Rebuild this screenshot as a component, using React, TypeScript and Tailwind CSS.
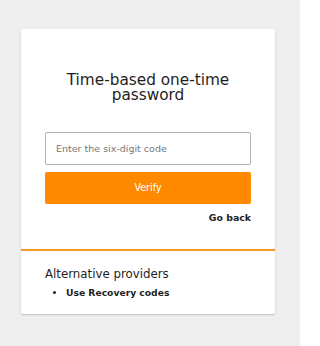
export default function App() {
  return (
    <div className="w-[300px] h-[346px] bg-[#eeeeee] pt-[29px] pl-[21px]" style={{ fontFamily: '"DejaVu Sans", Verdana, sans-serif' }}>
      <div className="w-[254px] bg-white rounded-[2px] shadow-[0_1px_2px_rgba(0,0,0,0.2)]">
        <div className="px-[24px] pt-[44px] pb-[26px] flex flex-col">
          <h1 className="text-[15.3px] leading-[15px] text-center text-[#1e1e1e]">Time-based one-time password</h1>
          <input
            className="mt-[29px] h-[33px] w-full border border-[#b3b3b3] rounded-[2px] px-[10px] text-[9.5px] text-[#333] placeholder:text-[#777777] outline-none"
            placeholder="Enter the six-digit code"
          />
          <button className="mt-[7px] h-[32px] w-full bg-[#ff8a00] rounded-[2px] text-white text-[9.6px]">Verify</button>
          <div className="mt-[8px] text-right text-[9.4px] font-bold text-[#1e1e1e] leading-[11px]">Go back</div>
        </div>
        <div className="h-[2px] bg-[#f29b2c]" />
        <div className="px-[24px] pt-[16px] pb-[16px]">
          <div className="text-[11.8px] leading-[14px] text-[#1e1e1e]">Alternative providers</div>
          <ul className="list-disc pl-[21px] mt-[6px] text-[9.2px] font-bold text-[#1e1e1e] leading-[11px]">
            <li>Use Recovery codes</li>
          </ul>
        </div>
      </div>
    </div>
  );
}
